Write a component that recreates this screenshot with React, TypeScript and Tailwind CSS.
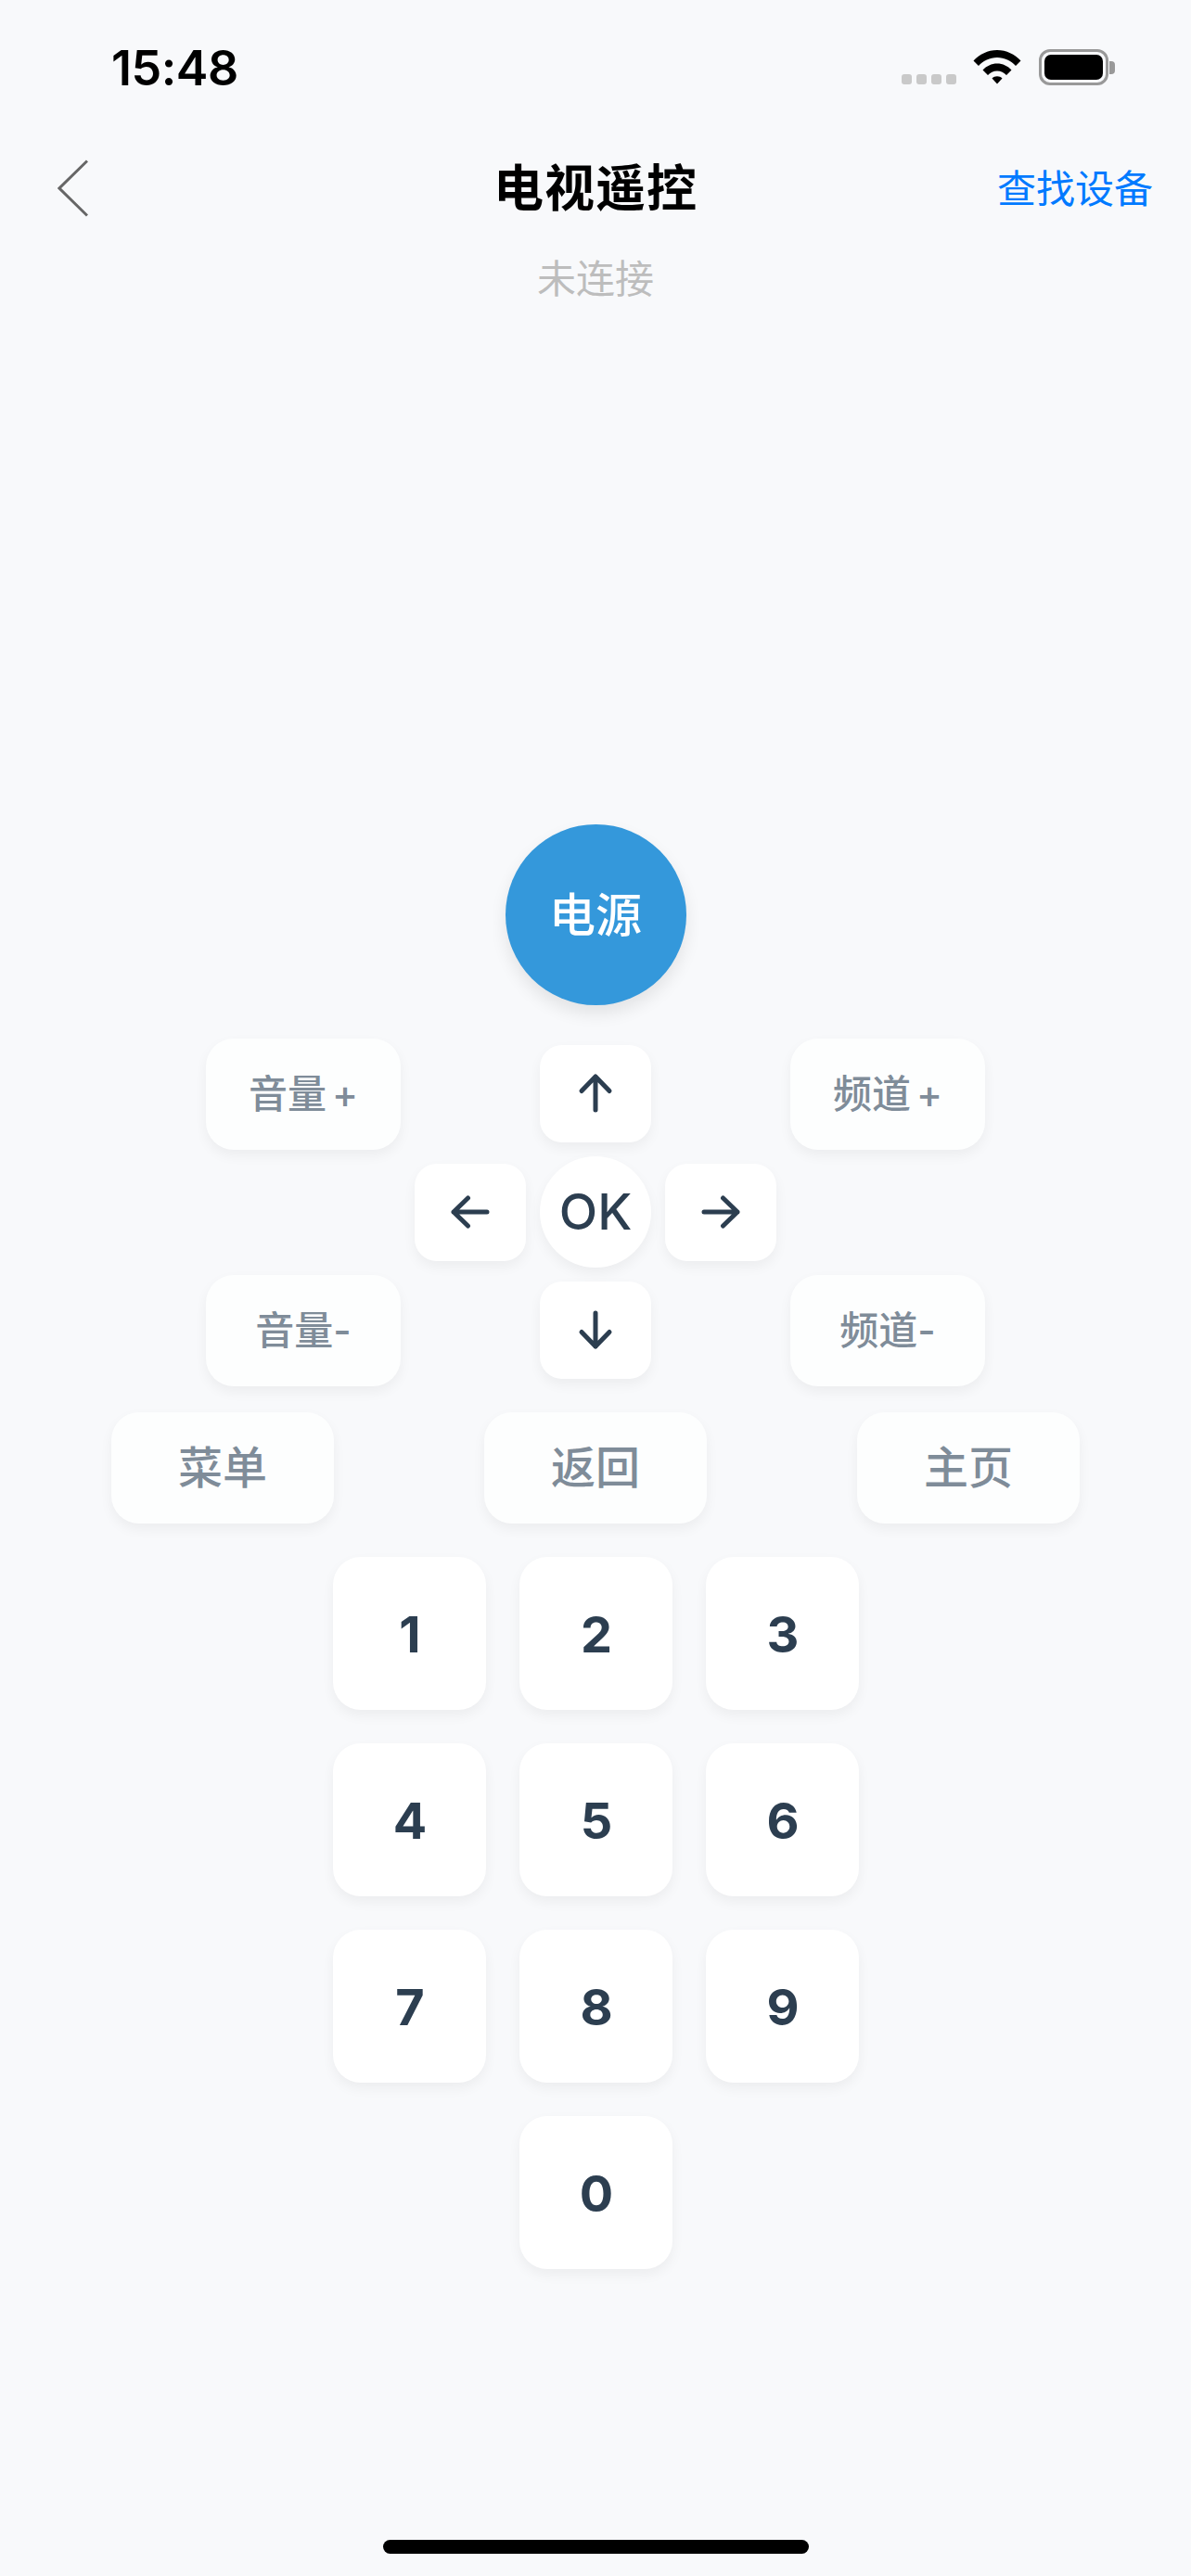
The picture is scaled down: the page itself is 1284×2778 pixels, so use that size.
import React from "react";

const shadow = "shadow-[0_6px_14px_rgba(0,0,0,0.05)]";

function Arrow({ dir }: { dir: "up" | "down" | "left" | "right" }) {
  const rot = { up: "rotate-0", right: "rotate-90", down: "rotate-180", left: "-rotate-90" }[dir];
  return (
    <svg width="40" height="44" viewBox="0 0 40 44" fill="none" className={rot}>
      <path d="M20 40V4M5 19.500 20 4l15 15.500" stroke="#2c3e50" strokeWidth="5" strokeLinecap="round" strokeLinejoin="round" />
    </svg>
  );
}

function Pill({ label, plus = false, w = "w-[210px]", size = "text-[42px]" }: { label: string; plus?: boolean; w?: string; size?: string }) {
  return (
    <button className={`${w} h-[120px] rounded-[30px] bg-[#fdfefe] ${shadow} flex items-center justify-center ${size} font-medium text-[#7f8c99] leading-none`}>
      {label}
      {plus && <span className="ml-[6px]">+</span>}
    </button>
  );
}

function Dir({ dir, lift = "" }: { dir: "up" | "down" | "left" | "right"; lift?: string }) {
  return (
    <button className={`w-[120px] h-[105px] rounded-[24px] bg-white ${shadow} flex items-center justify-center ${lift}`}>
      <Arrow dir={dir} />
    </button>
  );
}

function Digit({ n }: { n: string }) {
  return (
    <button className={`w-[165px] h-[165px] rounded-[30px] bg-white ${shadow} flex items-center justify-center pl-[2px] pt-[2px] text-[54px] font-bold text-[#2c3e50] leading-none`}>
      {n}
    </button>
  );
}

export default function App() {
  return (
    <div className="w-[1284px] h-[2778px] bg-[#f8f9fb] flex flex-col items-center overflow-hidden font-['Inter','Noto_Sans_CJK_SC',sans-serif]">
      {/* status bar */}
      <div className="w-full h-[132px] flex items-start justify-between pl-[120px] pr-[82px]">
        <span className="mt-[44px] text-[52px] leading-[60px] font-semibold text-black tracking-[-0.5px]">15:48</span>
        <div className="mt-[53px] flex items-end">
          <div className="flex gap-[5px] mb-[1px]">
            <span className="w-[11px] h-[11px] rounded-[3px] bg-[#c9c9c9]" />
            <span className="w-[11px] h-[11px] rounded-[3px] bg-[#c9c9c9]" />
            <span className="w-[11px] h-[11px] rounded-[3px] bg-[#c9c9c9]" />
            <span className="w-[11px] h-[11px] rounded-[3px] bg-[#c9c9c9]" />
          </div>
          <svg width="52" height="38" viewBox="0 0 52 38" className="ml-[18px] mb-[1px]">
            <path d="M0.500 12.500C7 5.500 16 1 26 1s19 4.500 25.500 11.500L46 18C41 12.700 34 9 26 9S11 12.700 6 18z" fill="#000" />
            <path d="M10.500 22.500C14.500 18.200 20 15.500 26 15.500s11.500 2.700 15.500 7L36 28c-2.500-2.700-6-4.500-10-4.500S18.500 25.300 16 28z" fill="#000" />
            <path d="M20.500 31.500c1.400-1.500 3.400-2.200 5.500-2.200s4.100.7 5.500 2.200L26 37.500z" fill="#000" />
          </svg>
          <div className="ml-[19px] w-[75px] h-[39px] rounded-[12px] border-[3px] border-[#999] p-[3px]">
            <div className="w-full h-full rounded-[7px] bg-black" />
          </div>
          <span className="ml-[1px] mb-[12px] w-[6px] h-[14px] rounded-r-[4px] bg-[#999]" />
        </div>
      </div>

      {/* nav */}
      <div className="w-full h-[141px] grid grid-cols-[1fr_auto_1fr] items-center px-[41px]">
        <svg width="33" height="62" viewBox="0 0 33 62" fill="none" className="ml-[21px]">
          <path d="M32 1.500 2 31l30 29.500" stroke="#666" strokeWidth="3" />
        </svg>
        <span className="mt-[3px] text-[54px] leading-[70px] font-bold text-black tracking-[1px]">电视遥控</span>
        <span className="mt-[2px] justify-self-end text-[42px] leading-[60px] text-[#007aff]">查找设备</span>
      </div>
      <div className="-mt-[2px] text-[42px] leading-[60px] text-[#bdbdbd]">未连接</div>

      {/* power */}
      <button className="mt-[558px] w-[195px] h-[195px] rounded-full bg-[#3498db] shadow-[0_9px_18px_rgba(0,0,0,0.09)] flex items-center justify-center text-[50px] font-medium text-white leading-none">
        电源
      </button>

      {/* d-pad */}
      <div className="mt-[36px] w-[840px] flex flex-col">
        <div className="flex items-center justify-between h-[120px]">
          <Pill label="音量" plus />
          <Dir dir="up" lift="-mt-[2px]" />
          <Pill label="频道" plus />
        </div>
        <div className="mt-[7px] h-[120px] flex items-center justify-center gap-[15px]">
          <Dir dir="left" />
          <button className={`w-[120px] h-[120px] rounded-full bg-white ${shadow} flex items-center justify-center text-[54px] font-medium text-[#2c3e50] leading-none`}>
            OK
          </button>
          <Dir dir="right" />
        </div>
        <div className="mt-[8px] flex items-center justify-between h-[120px]">
          <Pill label="音量-" />
          <Dir dir="down" lift="-mt-[2px]" />
          <Pill label="频道-" />
        </div>
      </div>

      {/* actions */}
      <div className="mt-[28px] w-[1044px] flex justify-between">
        <Pill label="菜单" w="w-[240px]" size="text-[48px]" />
        <Pill label="返回" w="w-[240px]" size="text-[48px]" />
        <Pill label="主页" w="w-[240px]" size="text-[48px]" />
      </div>

      {/* keypad */}
      <div className="mt-[36px] grid grid-cols-[165px_165px_165px] gap-[36px]">
        {["1", "2", "3", "4", "5", "6", "7", "8", "9"].map((n) => (
          <Digit key={n} n={n} />
        ))}
        <div className="col-start-2">
          <Digit n="0" />
        </div>
      </div>

      <div className="mt-auto mb-[24px] w-[459px] h-[15px] rounded-full bg-black" />
    </div>
  );
}
